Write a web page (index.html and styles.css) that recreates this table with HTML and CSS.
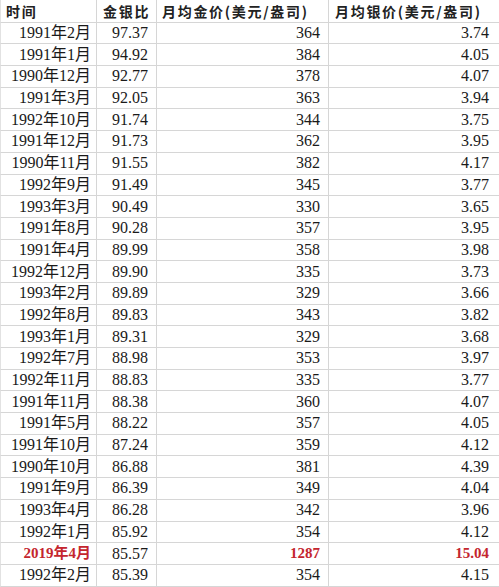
FILE: index.html
```html
<!DOCTYPE html>
<html lang="zh">
<head>
<meta charset="utf-8">
<title>金银比</title>
<link rel="stylesheet" href="styles.css">
</head>
<body>
<div class="sheet">
  <div class="c h c1">时间</div><div class="c h c2">金银比</div><div class="c h c3">月均金价(美元/盎司)</div><div class="c h c4">月均银价(美元/盎司)</div>
  <div class="c c1">1991年2月</div><div class="c c2">97.37</div><div class="c c3">364</div><div class="c c4">3.74</div>
  <div class="c c1">1991年1月</div><div class="c c2">94.92</div><div class="c c3">384</div><div class="c c4">4.05</div>
  <div class="c c1">1990年12月</div><div class="c c2">92.77</div><div class="c c3">378</div><div class="c c4">4.07</div>
  <div class="c c1">1991年3月</div><div class="c c2">92.05</div><div class="c c3">363</div><div class="c c4">3.94</div>
  <div class="c c1">1992年10月</div><div class="c c2">91.74</div><div class="c c3">344</div><div class="c c4">3.75</div>
  <div class="c c1">1991年12月</div><div class="c c2">91.73</div><div class="c c3">362</div><div class="c c4">3.95</div>
  <div class="c c1">1990年11月</div><div class="c c2">91.55</div><div class="c c3">382</div><div class="c c4">4.17</div>
  <div class="c c1">1992年9月</div><div class="c c2">91.49</div><div class="c c3">345</div><div class="c c4">3.77</div>
  <div class="c c1">1993年3月</div><div class="c c2">90.49</div><div class="c c3">330</div><div class="c c4">3.65</div>
  <div class="c c1">1991年8月</div><div class="c c2">90.28</div><div class="c c3">357</div><div class="c c4">3.95</div>
  <div class="c c1">1991年4月</div><div class="c c2">89.99</div><div class="c c3">358</div><div class="c c4">3.98</div>
  <div class="c c1">1992年12月</div><div class="c c2">89.90</div><div class="c c3">335</div><div class="c c4">3.73</div>
  <div class="c c1">1993年2月</div><div class="c c2">89.89</div><div class="c c3">329</div><div class="c c4">3.66</div>
  <div class="c c1">1992年8月</div><div class="c c2">89.83</div><div class="c c3">343</div><div class="c c4">3.82</div>
  <div class="c c1">1993年1月</div><div class="c c2">89.31</div><div class="c c3">329</div><div class="c c4">3.68</div>
  <div class="c c1">1992年7月</div><div class="c c2">88.98</div><div class="c c3">353</div><div class="c c4">3.97</div>
  <div class="c c1">1992年11月</div><div class="c c2">88.83</div><div class="c c3">335</div><div class="c c4">3.77</div>
  <div class="c c1">1991年11月</div><div class="c c2">88.38</div><div class="c c3">360</div><div class="c c4">4.07</div>
  <div class="c c1">1991年5月</div><div class="c c2">88.22</div><div class="c c3">357</div><div class="c c4">4.05</div>
  <div class="c c1">1991年10月</div><div class="c c2">87.24</div><div class="c c3">359</div><div class="c c4">4.12</div>
  <div class="c c1">1990年10月</div><div class="c c2">86.88</div><div class="c c3">381</div><div class="c c4">4.39</div>
  <div class="c c1">1991年9月</div><div class="c c2">86.39</div><div class="c c3">349</div><div class="c c4">4.04</div>
  <div class="c c1">1993年4月</div><div class="c c2">86.28</div><div class="c c3">342</div><div class="c c4">3.96</div>
  <div class="c c1">1992年1月</div><div class="c c2">85.92</div><div class="c c3">354</div><div class="c c4">4.12</div>
  <div class="c c1 hl">2019年4月</div><div class="c c2">85.57</div><div class="c c3 hl">1287</div><div class="c c4 hl">15.04</div>
  <div class="c c1">1992年2月</div><div class="c c2">85.39</div><div class="c c3">354</div><div class="c c4">4.15</div>
</div>
</body>
</html>
```

FILE: styles.css
```css
html, body {
  margin: 0;
  padding: 0;
  background: #ffffff;
}

.sheet {
  display: grid;
  grid-template-columns: 97px 60px 172px 170px;
  grid-template-rows: 22.7px;
  grid-auto-rows: 21.7px;
  width: 499px;
  font-family: "Liberation Serif", "Noto Sans CJK SC", serif;
  font-size: 16px;
  color: #1a1a1a;
}

.c {
  box-sizing: border-box;
  border-right: 1px solid #d6d6d6;
  border-bottom: 1px solid #d6d6d6;
  display: flex;
  align-items: center;
  justify-content: flex-end;
  white-space: nowrap;
  overflow: hidden;
  line-height: 1;
}

.c1 { padding-right: 5px; border-left: 1px solid #e2e2e2; }
.c2 { padding-right: 8px; }
.c3 { padding-right: 8px; }
.c4 { padding-right: 10px; border-right: none; }

.h {
  font-family: "Noto Sans CJK SC", sans-serif;
  font-weight: 700;
  font-size: 14px;
  color: #222222;
  justify-content: flex-start;
  letter-spacing: 1.7px;
}

.h.c1 { padding-left: 5px; }
.h.c2 { padding-left: 6px; }
.h.c3 { padding-left: 5px; }
.h.c4 { padding-left: 6px; }

.hl {
  color: #c4262e;
  font-weight: 700;
  font-size: 15px;
}
```
